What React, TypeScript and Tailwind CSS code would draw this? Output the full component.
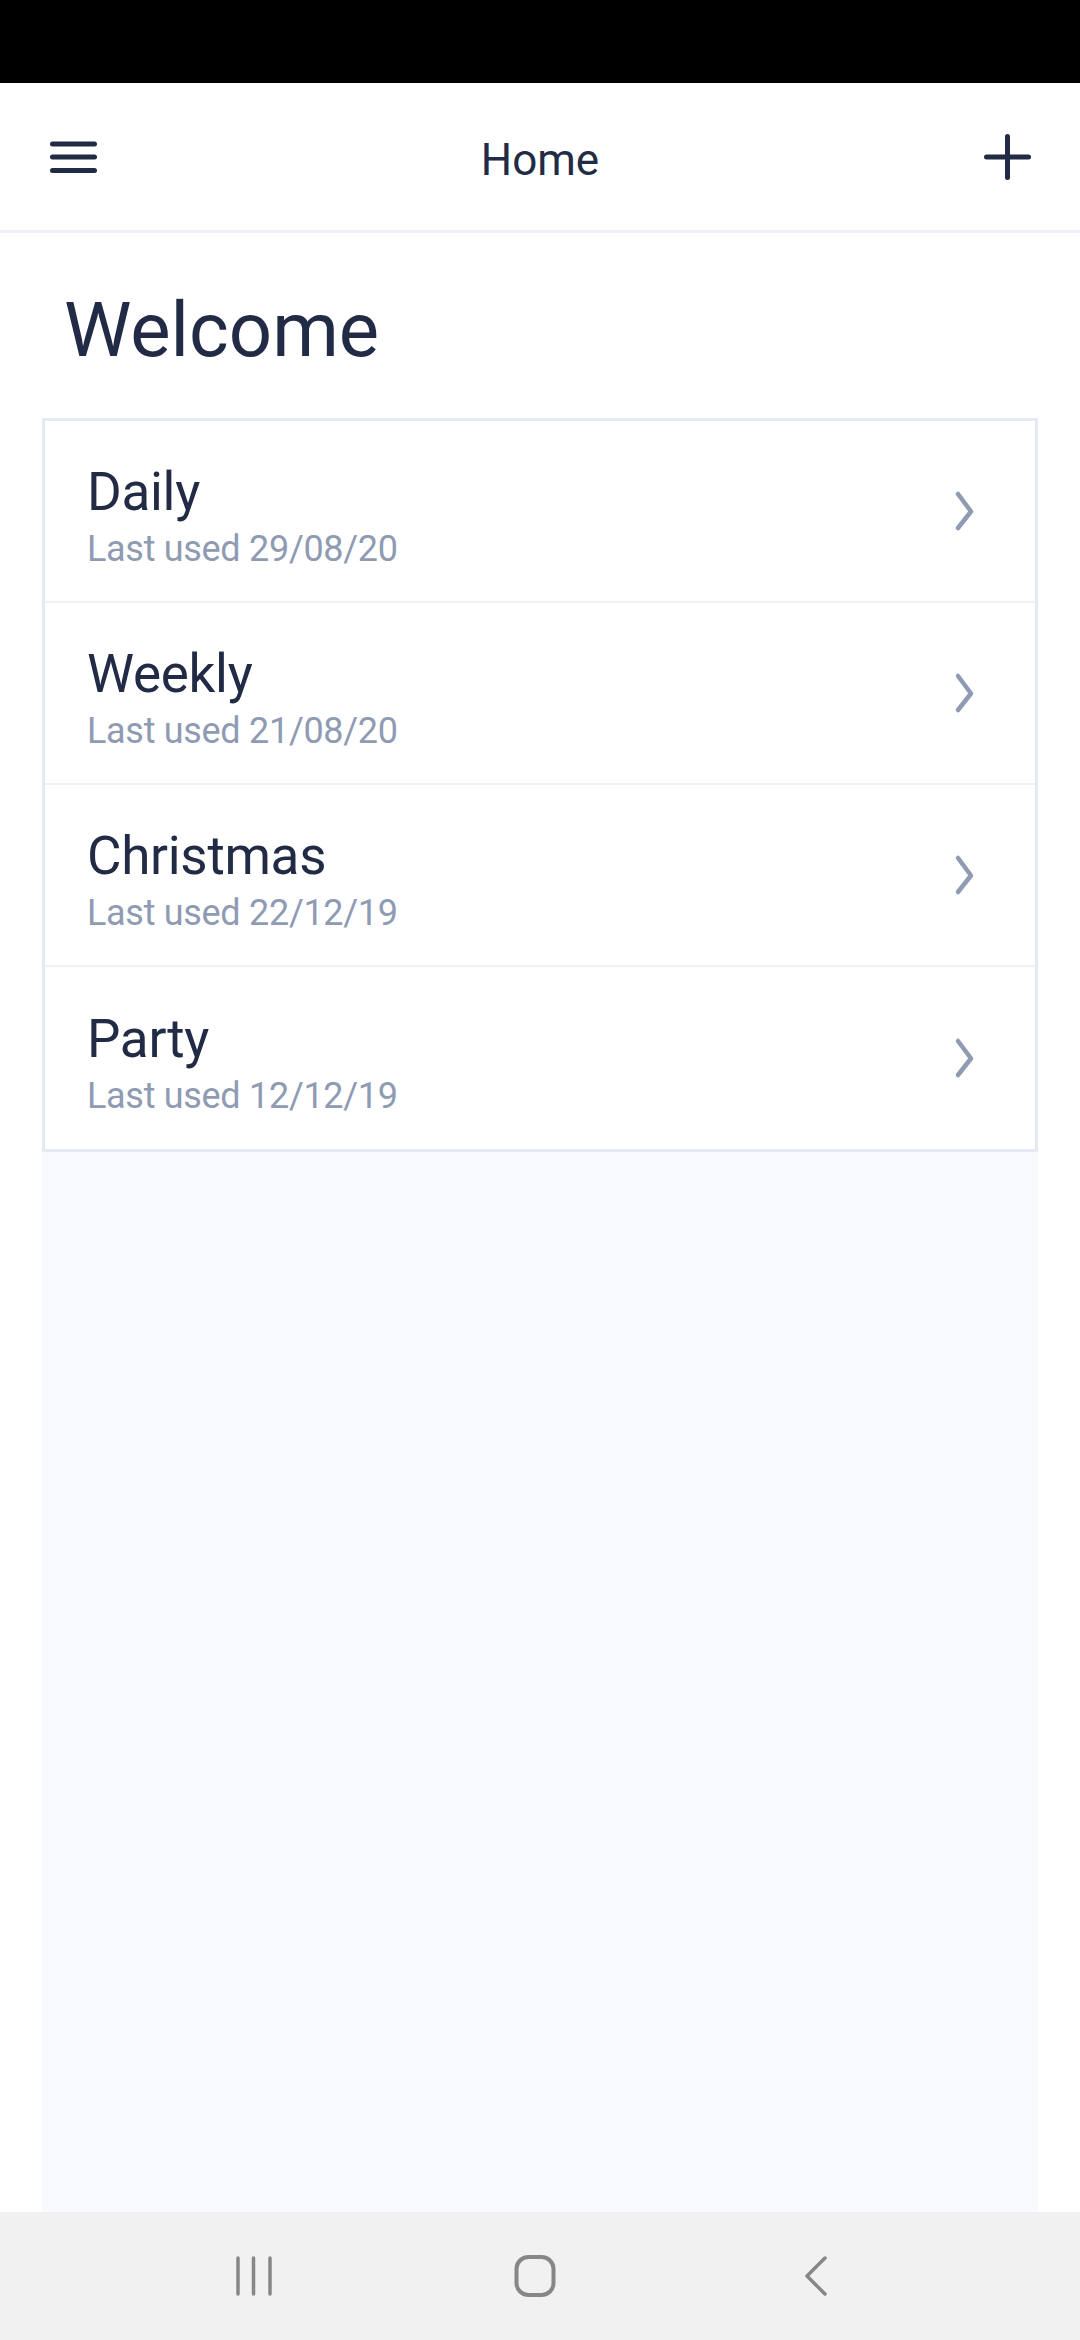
import React from "react";

const lists = [
  { name: "Daily", used: "29/08/20" },
  { name: "Weekly", used: "21/08/20" },
  { name: "Christmas", used: "22/12/19" },
  { name: "Party", used: "12/12/19" },
];

const Chevron = () => (
  <svg width="24" height="44" viewBox="0 0 24 44" fill="none">
    <path
      d="M6 5 L19 22.5 L6 39"
      stroke="#8F9BB3"
      strokeWidth="4.5"
      strokeLinecap="round"
      strokeLinejoin="round"
    />
  </svg>
);

const App = () => {
  return (
    <div className="flex flex-col w-[1080px] h-[2340px] bg-white font-['Roboto',sans-serif] text-[#222B45]">
      <div className="h-[83px] bg-black shrink-0" />

      <header className="flex items-center justify-between h-[150px] shrink-0 px-[49px] border-b-[3px] border-[#EDF1F7]">
        <svg width="48" height="40" viewBox="0 0 48 40" fill="none">
          <path
            d="M3.5 7 H45.5 M3.5 20 H45.5 M3.5 33.5 H45.5"
            stroke="#222B45"
            strokeWidth="5"
            strokeLinecap="round"
          />
        </svg>
        <h1 className="pt-[6px] text-[44px] leading-[52px]">Home</h1>
        <svg width="48" height="48" viewBox="0 0 48 48" fill="none">
          <path
            d="M24.5 3.5 V44.5 M3.5 24 H45.5"
            stroke="#222B45"
            strokeWidth="5"
            strokeLinecap="round"
          />
        </svg>
      </header>

      <div className="flex flex-col flex-1 px-[42px]">
        <h2 className="pl-[22px] pt-[53px] pb-[43px] text-[76px] leading-[89px]">
          Welcome
        </h2>

        <div className="flex-1 bg-[#F7F9FC]">
          <ul className="bg-white border-[3px] border-[#E4E9F2]">
            {lists.map((item, i) => (
              <li
                key={item.name}
                className={`flex items-center justify-between h-[182px] pl-[42px] pr-[59px] ${
                  i < lists.length - 1 ? "border-b-2 border-[#EDF1F7]" : ""
                }`}
              >
                <div className="flex flex-col mt-[10px]">
                  <span className="text-[53px] leading-[62px] tracking-[-0.3px]">
                    {item.name}
                  </span>
                  <span className="mt-1 text-[36px] leading-[44px] tracking-[-0.3px] text-[#8F9BB3]">
                    Last used {item.used}
                  </span>
                </div>
                <Chevron />
              </li>
            ))}
          </ul>
        </div>
      </div>

      <nav className="flex items-center justify-center h-[128px] shrink-0 pr-[10px] bg-[#F1F1F1]">
        <div className="flex justify-center w-[281px]">
          <svg width="40" height="42" viewBox="0 0 40 42" fill="none">
            <path
              d="M4 3 V39 M19.5 3 V39 M36 3 V39"
              stroke="#878787"
              strokeWidth="3.5"
              strokeLinecap="round"
            />
          </svg>
        </div>
        <div className="flex justify-center w-[281px]">
          <svg width="44" height="46" viewBox="0 0 44 46" fill="none">
            <rect
              x="3.5"
              y="4"
              width="37"
              height="38"
              rx="12"
              stroke="#878787"
              strokeWidth="4"
            />
          </svg>
        </div>
        <div className="flex justify-center w-[281px]">
          <svg width="28" height="42" viewBox="0 0 28 42" fill="none">
            <path
              d="M23 3 L5 21 L23 39"
              stroke="#878787"
              strokeWidth="3.5"
              strokeLinecap="round"
              strokeLinejoin="round"
            />
          </svg>
        </div>
      </nav>
    </div>
  );
};

export default App;
